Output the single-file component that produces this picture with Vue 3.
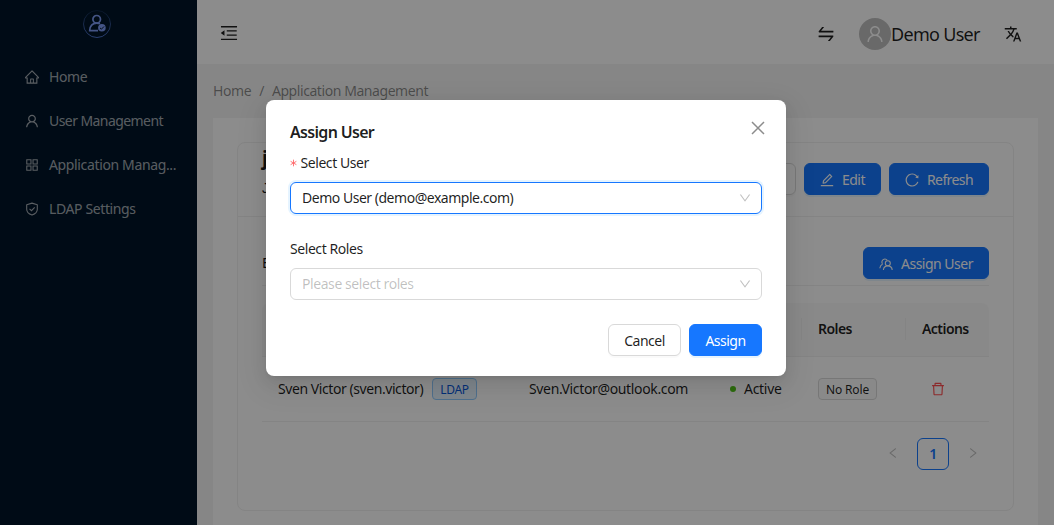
<script setup>
const icons = {
  home: 'M946.5 505L560.1 118.8l-25.9-25.9a31.5 31.5 0 00-44.4 0L77.5 505a63.9 63.9 0 00-18.8 46c.4 35.2 29.7 63.3 64.9 63.3h42.5V940h691.8V614.3h43.4c17.1 0 33.2-6.7 45.3-18.8a63.6 63.6 0 0018.7-45.3c0-17-6.7-33.1-18.8-45.2zM568 868H456V664h112v204zm217.9-325.7V868H632V640c0-22.1-17.9-40-40-40H432c-22.1 0-40 17.9-40 40v228H238.1V542.3h-96l370-369.7 23.1 23.1L882 542.3h-96.1z',
  user: 'M858.5 763.6a374 374 0 00-80.6-119.5 375.63 375.63 0 00-119.5-80.6c-.4-.2-.8-.3-1.2-.5C719.5 518 760 444.7 760 362c0-137-111-248-248-248S264 225 264 362c0 82.7 40.5 156 102.8 201.1-.4.2-.8.3-1.2.5-44.8 18.9-85 46-119.5 80.6a375.63 375.63 0 00-80.6 119.5A371.7 371.7 0 00136 901.8a8 8 0 008 8.2h60c4.4 0 7.9-3.5 8-7.8 2-77.2 33-149.5 87.8-204.3 56.7-56.7 132-87.9 212.2-87.9s155.5 31.2 212.2 87.9C779 752.7 810 825 812 902.2c.1 4.4 3.6 7.8 8 7.8h60a8 8 0 008-8.2c-1-47.8-10.9-94.3-29.5-138.2zM512 534c-45.9 0-89.1-17.9-121.6-50.4S340 407.9 340 362c0-45.9 17.9-89.1 50.4-121.6S466.1 190 512 190s89.1 17.9 121.6 50.4S684 316.1 684 362c0 45.9-17.9 89.1-50.4 121.6S557.9 534 512 534z',
  apps: 'M464 144H160c-8.8 0-16 7.2-16 16v304c0 8.8 7.2 16 16 16h304c8.8 0 16-7.2 16-16V160c0-8.8-7.2-16-16-16zm-52 268H212V212h200v200zm452-268H560c-8.8 0-16 7.2-16 16v304c0 8.8 7.2 16 16 16h304c8.8 0 16-7.2 16-16V160c0-8.8-7.2-16-16-16zm-52 268H612V212h200v200zM464 544H160c-8.8 0-16 7.2-16 16v304c0 8.8 7.2 16 16 16h304c8.8 0 16-7.2 16-16V560c0-8.8-7.2-16-16-16zm-52 268H212V612h200v200zm452-268H560c-8.8 0-16 7.2-16 16v304c0 8.8 7.2 16 16 16h304c8.8 0 16-7.2 16-16V560c0-8.8-7.2-16-16-16zm-52 268H612V612h200v200z',
  fold: 'M408 442h480c4.4 0 8-3.6 8-8v-56c0-4.4-3.6-8-8-8H408c-4.4 0-8 3.6-8 8v56c0 4.4 3.6 8 8 8zm-8 204c0 4.4 3.6 8 8 8h480c4.4 0 8-3.6 8-8v-56c0-4.4-3.6-8-8-8H408c-4.4 0-8 3.6-8 8v56zm504-486H120c-4.4 0-8 3.6-8 8v56c0 4.4 3.6 8 8 8h784c4.4 0 8-3.6 8-8v-56c0-4.4-3.6-8-8-8zm0 632H120c-4.4 0-8 3.6-8 8v56c0 4.4 3.6 8 8 8h784c4.4 0 8-3.6 8-8v-56c0-4.4-3.6-8-8-8zM115.4 518.9L271.7 642c5.8 4.6 14.4.5 14.4-6.9V388.9c0-7.4-8.5-11.5-14.4-6.9L115.4 505.1a8.74 8.74 0 000 13.8z',
  swap: 'M847.9 592H152c-4.4 0-8 3.6-8 8v60c0 4.4 3.6 8 8 8h605.2L612.9 851c-4.1 5.2-.4 13 6.3 13h72.5c4.9 0 9.5-2.2 12.6-6.1l168.8-214.1c16.5-21 1.6-51.8-25.2-51.8zM872 356H266.8l144.3-183c4.1-5.2.4-13-6.3-13h-72.5c-4.9 0-9.5 2.2-12.6 6.1L150.9 380.2c-16.5 21-1.6 51.8 25.1 51.8h696c4.4 0 8-3.6 8-8v-60c0-4.4-3.6-8-8-8z',
  edit: 'M257.7 752c2 0 4-.2 6-.5L431.9 722c2-.4 3.9-1.3 5.3-2.8l423.9-423.9a9.96 9.96 0 000-14.1L694.9 114.9c-1.9-1.9-4.4-2.9-7.1-2.9s-5.2 1-7.1 2.9L256.8 538.8c-1.5 1.5-2.4 3.3-2.8 5.3l-29.5 168.2a33.5 33.5 0 009.4 29.8c6.6 6.4 14.9 9.9 23.8 9.9zm67.4-174.4L687.8 215l73.3 73.3-362.7 362.6-88.9 15.7 15.6-89zM880 836H144c-17.7 0-32 14.3-32 32v36c0 4.4 3.6 8 8 8h784c4.4 0 8-3.6 8-8v-36c0-17.7-14.3-32-32-32z',
  reload: 'M909.1 209.3l-56.4 44.1C775.8 155.1 656.2 92 521.9 92 290 92 102.3 279.5 102 511.5 101.7 743.7 289.8 932 521.9 932c181.3 0 335.8-115 394.6-276.1 1.5-4.2-.7-8.9-4.9-10.3l-56.7-19.5a8 8 0 00-10.1 4.8c-1.8 5-3.8 10-5.9 14.9-17.3 41-42.1 77.8-73.7 109.4A344.77 344.77 0 01655.9 829c-42.3 17.9-87.4 27-133.8 27-46.5 0-91.5-9.1-133.8-27A341.5 341.5 0 01279 755.2a342.16 342.16 0 01-73.7-109.4c-17.9-42.4-27-87.4-27-133.9s9.1-91.5 27-133.9c17.3-41 42.1-77.8 73.7-109.4 31.6-31.6 68.4-56.4 109.3-73.8 42.3-17.9 87.4-27 133.8-27 46.5 0 91.5 9.1 133.8 27a341.5 341.5 0 01109.3 73.8c9.9 9.9 19.2 20.4 27.8 31.4l-60.2 47a8 8 0 003 14.1l175.6 43c5 1.2 9.9-2.6 9.9-7.7l.8-180.9c-.1-6.6-7.8-10.3-13-6.2z',
  trash: 'M360 184h-8c4.4 0 8-3.6 8-8v8h304v-8c0 4.4 3.6 8 8 8h-8v72h72v-80c0-35.3-28.7-64-64-64H352c-35.3 0-64 28.7-64 64v80h72v-72zm504 72H160c-17.7 0-32 14.3-32 32v32c0 4.4 3.6 8 8 8h60.4l24.7 523c1.6 34.1 29.8 61 63.9 61h454c34.2 0 62.3-26.8 63.9-61l24.7-523H888c4.4 0 8-3.6 8-8v-32c0-17.7-14.3-32-32-32zM731.3 840H292.7l-24.2-512h487l-24.2 512z',
  down: 'M884 256h-75c-5.1 0-9.9 2.5-12.9 6.6L512 654.2 227.9 262.6c-3-4.1-7.8-6.6-12.9-6.6h-75c-6.5 0-10.3 7.4-6.5 12.7l352.6 486.1c12.8 17.6 39 17.6 51.7 0l352.6-486.1c3.9-5.3.1-12.7-6.4-12.7z',
  right: 'M765.7 486.8L314.9 134.7A7.97 7.97 0 00302 141v77.3c0 4.9 2.3 9.6 6.1 12.6l360 281.1-360 281.1c-3.9 3-6.1 7.7-6.1 12.6V883c0 6.7 7.7 10.4 12.9 6.3l450.8-352.1a31.96 31.96 0 000-50.4z',
}
const menu = [
  { icon: 'home', label: 'Home' },
  { icon: 'user', label: 'User Management' },
  { icon: 'apps', label: 'Application Manag...' },
  { icon: 'shield', label: 'LDAP Settings' },
]
const box = '64 64 896 896'
</script>

<template>
  <div class="app">
    <aside class="side">
      <svg class="logo" viewBox="0 0 28 28" fill="none">
        <defs>
          <linearGradient id="ring" x1="0" y1="0" x2="0" y2="1">
            <stop offset="0" stop-color="#5b83e8" stop-opacity=".15" />
            <stop offset="1" stop-color="#5b83e8" stop-opacity=".85" />
          </linearGradient>
        </defs>
        <circle cx="14" cy="14" r="13.5" stroke="url(#ring)" stroke-width="1" />
        <circle cx="13.7" cy="9.3" r="3.8" stroke="#7f9cf5" stroke-width="1.7" />
        <path d="M17 13.8Q15.5 13.1 13.7 13.1C9.5 13.1 6.700 16 6.700 20.600H15" stroke="#7f9cf5" stroke-width="1.700" />
        <circle cx="18.900" cy="17.800" r="3.800" fill="#7f9cf5" />
        <path d="M17 17.900l1.400 1.300 2.600-2.700" stroke="#001529" stroke-width="1" />
      </svg>
      <nav>
        <a v-for="m in menu" :key="m.label" class="item">
          <svg v-if="m.icon === 'shield'" class="i14" viewBox="0 0 14 14" fill="none" stroke="currentColor">
            <path d="M7 1.100L12.300 2.700V7.300C12.300 10.300 10 12.100 7 13.100C4 12.100 1.700 10.300 1.700 7.300V2.700Z" stroke-width="1.100" stroke-linejoin="round" />
            <path d="M4.500 6.800L6.500 8.700L9.700 5.300" stroke-width="1.100" />
          </svg>
          <svg v-else class="i14" :viewBox="box" fill="currentColor"><path :d="icons[m.icon]" /></svg>
          <span :class="m.icon">{{ m.label }}</span>
        </a>
      </nav>
    </aside>

    <div class="main">
      <header class="top">
        <svg class="i18 fold" :viewBox="box"><path :d="icons.fold" /></svg>
        <svg class="i18 swap" :viewBox="box"><path :d="icons.swap" /></svg>
        <span class="avatar"><svg class="i18" :viewBox="box"><path :d="icons.user" /></svg></span>
        <span class="uname">Demo User</span>
        <svg class="i18 lang" viewBox="0 0 24 24"><path d="M12.870 15.070l-2.540-2.510.030-.030A17.520 17.520 0 0014.070 6H17V4h-7V2H8v2H1v2h11.170C11.500 7.920 10.440 9.750 9 11.350 8.070 10.320 7.300 9.190 6.690 8h-2c.730 1.630 1.730 3.170 2.980 4.560l-5.090 5.020L4 19l5-5 3.110 3.110.760-2.040zM18.500 10h-2L12 22h2l1.120-3h4.750L21 22h2l-4.500-12zm-2.620 7l1.620-4.330L19.120 17h-3.240z" /></svg>
      </header>
      <div class="crumb"><span>Home</span><span class="sep">/</span><span>Application Management</span></div>
      <section class="panel">
        <div class="card">
          <div class="card-head">
            <div class="names"><b>j</b><span>J</span></div>
            <div class="actions">
              <button class="btn ghost"></button>
              <button class="btn primary edit"><svg class="i14" :viewBox="box"><path :d="icons.edit" /></svg>Edit</button>
              <button class="btn primary refresh"><svg class="i14" :viewBox="box"><path :d="icons.reload" /></svg>Refresh</button>
            </div>
          </div>
          <div class="card-body">
            <div class="bar">
              <span>E</span>
              <button class="btn primary">
                <svg class="i14 line" viewBox="0 0 14 14">
                  <path d="M3.400 6.700A2.900 2.900 0 1 1 8.200 3.400M3.600 6.900C1.900 7.800 1 9.200 .8 11.200" />
                  <circle cx="8.800" cy="6.300" r="2.500" />
                  <path d="M4.400 13C4.600 10.500 6.400 8.900 8.800 8.900S13 10.500 13.200 13" />
                </svg>Assign User
              </button>
            </div>
            <div class="row head">
              <div></div><div></div><div class="cut"></div><div class="cut">Roles</div><div>Actions</div>
            </div>
            <div class="row data">
              <div>Sven Victor (sven.victor)<span class="tag blue">LDAP</span></div>
              <div class="mail">Sven.Victor@outlook.com</div>
              <div class="state"><i class="dot"></i>Active</div>
              <div><span class="tag">No Role</span></div>
              <div class="del"><svg class="i14" :viewBox="box"><path :d="icons.trash" /></svg></div>
            </div>
            <div class="pages">
              <span class="arrow"><svg class="flip" :viewBox="box"><path :d="icons.right" /></svg></span>
              <span class="page">1</span>
              <span class="arrow"><svg :viewBox="box"><path :d="icons.right" /></svg></span>
            </div>
          </div>
        </div>
      </section>
    </div>

    <div class="mask">
      <div class="modal" role="dialog">
        <svg class="close" viewBox="0 0 16 16"><path d="M2 2L14 14M14 2L2 14" /></svg>
        <h2>Assign User</h2>
        <label><svg class="star" viewBox="0 0 8 8"><path d="M4 .2V7.800M.7 2.100L7.300 5.900M7.300 2.100L.7 5.900" /></svg>Select User</label>
        <div class="select focus"><span>Demo User (demo@example.com)</span><svg :viewBox="box"><path :d="icons.down" /></svg></div>
        <label class="second">Select Roles</label>
        <div class="select"><span class="ph">Please select roles</span><svg :viewBox="box"><path :d="icons.down" /></svg></div>
        <div class="foot">
          <button class="btn">Cancel</button>
          <button class="btn primary">Assign</button>
        </div>
      </div>
    </div>
  </div>
</template>

<style>
body { margin: 0; overflow: hidden; }
</style>

<style scoped>
* { box-sizing: border-box; }
.app { position: relative; width: 1054px; height: 525px; display: flex; overflow: hidden; background: #f5f5f5; color: rgba(0,0,0,.88); font: 14px/22px "Noto Sans", sans-serif; letter-spacing: -.43px; }
svg { display: block; flex: none; fill: currentColor; }
.i14 { width: 14px; height: 14px; }
.i18 { width: 18px; height: 18px; }
.side { width: 197px; flex: none; background: #001529; color: rgba(255,255,255,.65); }
.logo { width: 28px; height: 28px; margin: 10px 0 0 83px; fill: none; }
nav { margin-top: 19px; display: flex; flex-direction: column; gap: 4px; }
.item { height: 40px; display: flex; align-items: center; gap: 10px; padding-left: 25px; }
.item svg:not([fill="currentColor"]) { fill: none; }
.item span { white-space: nowrap; }
.item .user { letter-spacing: -.57px; }
.item .apps { letter-spacing: -.36px; }
.item .shield { letter-spacing: -.38px; }
.main { flex: 1; min-width: 0; }
.top { height: 64px; background: #fff; display: flex; align-items: center; padding: 4px 32px 0 23px; }
.top .fold { margin-top: -2px; }
.top .swap { margin-left: auto; }
.avatar { width: 32px; height: 32px; margin-left: 24px; border-radius: 50%; background: #bfbfbf; color: #fff; display: flex; align-items: center; justify-content: center; }
.uname { font-size: 18px; width: 89px; white-space: nowrap; letter-spacing: -.7px; }
.lang { margin-left: 24px; }
.crumb { height: 54px; padding: 16px 16px 0; display: flex; color: rgba(0,0,0,.45); }
.sep { margin: 0 8px; }
.panel { margin: 0 16px; padding: 24px; height: 420px; background: #fff; }
.card { height: 369px; border: 1px solid #f0f0f0; border-radius: 8px; }
.card-head { height: 74px; padding: 0 24px; display: flex; align-items: center; justify-content: space-between; border-bottom: 1px solid #f0f0f0; }
.names { align-self: flex-start; padding-top: 1px; display: flex; flex-direction: column; }
.names b { font-size: 20px; line-height: 28px; }
.names span { margin-top: 5px; font-family: "Liberation Sans", sans-serif; }
.actions { display: flex; gap: 8px; margin-bottom: 1px; }
.btn { height: 32px; padding: 1px 15px 0; display: flex; align-items: center; justify-content: center; gap: 8px; font: inherit; letter-spacing: -.5px; color: inherit; background: #fff; border: 1px solid #d9d9d9; border-radius: 6px; box-shadow: 0 2px 0 rgba(0,0,0,.02); white-space: nowrap; }
.btn.primary { background: #1677ff; border-color: #1677ff; color: #fff; box-shadow: 0 2px 0 rgba(5,145,255,.1); }
.btn.ghost { width: 80px; }
.btn.edit { width: 77px; }
.btn.refresh { width: 100px; letter-spacing: -.6px; }
.card-body { padding: 0 24px; }
.line { fill: none; stroke: currentColor; stroke-width: 1.100; }
.bar { height: 69px; padding-top: 24px; display: flex; align-items: center; justify-content: space-between; border-bottom: 1px solid #f0f0f0; }
.row { display: grid; grid-template-columns: 251px 201px 88px 104px 83px; align-items: center; border-bottom: 1px solid #f0f0f0; }
.row > div { padding-left: 16px; display: flex; align-items: center; position: relative; white-space: nowrap; }
.head { height: 54px; margin-top: 17px; padding-bottom: 1px; background: #fafafa; border-radius: 8px 8px 0 0; font-weight: 600; letter-spacing: -.55px; }
.cut { height: 22px; border-right: 1px solid #f0f0f0; }
.data { height: 65px; }
.data .mail { letter-spacing: -.35px; }
.data .state { letter-spacing: -.3px; }
.tag { height: 22px; padding: 1px 7px 0; font-size: 12px; line-height: 20px; letter-spacing: -.15px; border: 1px solid #d9d9d9; border-radius: 4px; background: #fafafa; }
.tag.blue { margin-left: 9px; letter-spacing: -.3px; color: #0958d9; border-color: #91caff; background: #e6f4ff; }
.dot { width: 6px; height: 6px; margin-right: 8px; border-radius: 50%; background: #52c41a; }
.row .del { padding-left: 25px; color: #ff4d4f; }
.pages { margin-top: 16px; display: flex; justify-content: flex-end; gap: 8px; }
.arrow, .page { width: 32px; height: 32px; display: flex; align-items: center; justify-content: center; color: rgba(0,0,0,.25); }
.arrow svg { width: 12px; height: 12px; margin-top: -2px; }
.flip { transform: scaleX(-1); }
.page { border: 1px solid #1677ff; border-radius: 6px; color: #1677ff; font-weight: 600; }
.mask { position: absolute; inset: 0; background: rgba(0,0,0,.45); }
.modal { position: relative; width: 520px; height: 276px; margin: 100px 0 0 266px; padding: 20px 24px; background: #fff; border-radius: 8px; box-shadow: 0 6px 16px 0 rgba(0,0,0,.08), 0 3px 6px -4px rgba(0,0,0,.12), 0 9px 28px 8px rgba(0,0,0,.05); }
.close { position: absolute; right: 20px; top: 20px; width: 16px; height: 16px; stroke: rgba(0,0,0,.45); stroke-width: 1.500; fill: none; }
h2 { margin: 0 0 8px; font-size: 16px; line-height: 24px; font-weight: 600; letter-spacing: -.68px; }
label { display: flex; align-items: center; height: 22px; margin-bottom: 8px; }
label.second { margin-top: 24px; }
.star { width: 7px; height: 8px; margin: -1px 4px 0 -.5px; stroke: #ff4d4f; stroke-width: 1; opacity: .85; }
.select { height: 32px; padding: 0 10px 0 11px; display: flex; align-items: center; justify-content: space-between; border: 1px solid #d9d9d9; border-radius: 6px; }
.select.focus { border-color: #1677ff; box-shadow: 0 0 0 2px rgba(5,145,255,.1); letter-spacing: -.48px; }
.select svg { width: 12px; height: 12px; color: rgba(0,0,0,.25); }
.ph { color: rgba(0,0,0,.25); }
.foot { display: flex; justify-content: flex-end; gap: 8px; margin-top: 24px; }
.foot .btn { width: 73px; }
</style>
